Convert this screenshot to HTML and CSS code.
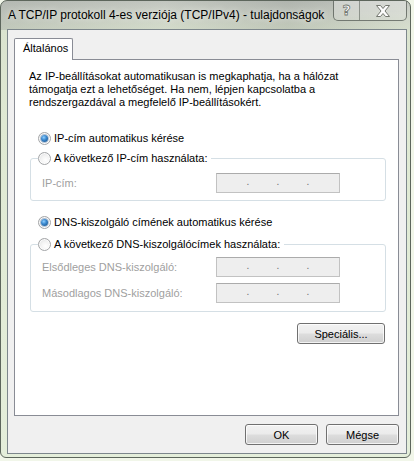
FILE: index.html
```html
<!DOCTYPE html>
<html lang="hu">
<head>
<meta charset="utf-8">
<title>TCP/IPv4</title>
<link rel="stylesheet" href="styles.css">
</head>
<body>
<div class="window">
  <div class="titlebar">
    <span class="title">A TCP/IP protokoll 4-es verziója (TCP/IPv4) - tulajdonságok</span>
    <div class="caption">
      <div class="cbtn help"><span class="qmark">?</span></div>
      <div class="cbtn close">
        <svg width="16" height="12" viewBox="0 0 16 12">
          <path d="M1.5 0.5 H5.5 L8 3.5 L10.5 0.5 H14.5 L10 6 L14.5 11.5 H10.5 L8 8.5 L5.5 11.5 H1.5 L6 6 Z" fill="#fdfdfd" stroke="#73776f" stroke-width="1" stroke-linejoin="round"/>
        </svg>
      </div>
    </div>
  </div>
  <div class="client">
    <div class="tabs"><div class="tab">Általános</div></div>
    <div class="panel">
      <p class="intro">Az IP-beállításokat automatikusan is megkaphatja, ha a hálózat<br>támogatja ezt a lehetőséget. Ha nem, lépjen kapcsolatba a<br>rendszergazdával a megfelelő IP-beállításokért.</p>

      <div class="radio-row first"><span class="radio checked"></span><span>IP-cím automatikus kérése</span></div>

      <div class="group g1">
        <div class="legend"><span class="radio"></span><span>A következő IP-cím használata:</span></div>
        <div class="field f-first"><span class="flabel">IP-cím:</span><span class="ipbox"><span class="dot">.</span><span class="dot">.</span><span class="dot">.</span></span></div>
      </div>

      <div class="radio-row dns"><span class="radio checked"></span><span>DNS-kiszolgáló címének automatikus kérése</span></div>

      <div class="group g2">
        <div class="legend"><span class="radio"></span><span>A következő DNS-kiszolgálócímek használata:</span></div>
        <div class="field f-first2"><span class="flabel">Elsődleges DNS-kiszolgáló:</span><span class="ipbox"><span class="dot">.</span><span class="dot">.</span><span class="dot">.</span></span></div>
        <div class="field f-second"><span class="flabel">Másodlagos DNS-kiszolgáló:</span><span class="ipbox"><span class="dot">.</span><span class="dot">.</span><span class="dot">.</span></span></div>
      </div>

      <div class="special-row"><button class="btn special">Speciális...</button></div>
    </div>
    <div class="footer">
      <button class="btn action">OK</button>
      <button class="btn action">Mégse</button>
    </div>
  </div>
</div>
</body>
</html>
```

FILE: styles.css
```css
* { box-sizing: border-box; }

html, body {
  margin: 0;
  padding: 0;
}

body {
  width: 414px;
  height: 461px;
  background: #f1f6e9;
  font-family: "Liberation Sans", Arial, sans-serif;
  font-size: 11px;
  color: #000;
  overflow: hidden;
}

.window {
  width: 411px;
  height: 458px;
  border: 1px solid #5d665c;
  border-radius: 7px 7px 6px 6px;
  background:
    linear-gradient(90deg, rgba(150,155,150,0.35) 0, rgba(190,195,185,0.2) 40%, rgba(120,125,120,0.25) 70%, rgba(200,205,195,0.15) 100%) top / 100% 29px no-repeat,
    linear-gradient(180deg, #c3c7c1 0, #d2d7cc 14px, #dae3cf 30px, #dfe9d3 120px, #e4eeda 100%);
  padding: 0 3px 3px 6px;
  display: flex;
  flex-direction: column;
}

.titlebar {
  height: 28px;
  display: flex;
  align-items: flex-start;
}

.title {
  flex: 1;
  padding: 6px 0 0 1px;
  font-family: "Liberation Sans", Arial, sans-serif;
  font-size: 12px;
  line-height: 16px;
  color: #000;
  text-shadow: 0 0 6px rgba(255,255,255,0.8);
  white-space: nowrap;
}

.caption {
  display: flex;
  height: 20px;
  border: 1px solid rgba(70,78,70,0.7);
  border-top: none;
  border-radius: 0 0 5px 5px;
  overflow: hidden;
  background: linear-gradient(180deg, rgba(255,255,255,0.35), rgba(255,255,255,0.15));
}

.cbtn {
  height: 19px;
  display: flex;
  align-items: center;
  justify-content: center;
}

.help {
  width: 26px;
  border-right: 1px solid rgba(70,78,70,0.5);
}

.qmark {
  font-family: "DejaVu Sans", sans-serif;
  font-weight: bold;
  font-size: 14px;
  line-height: 14px;
  color: #fdfdfd;
  -webkit-text-stroke: 0.8px #73776f;
  margin-top: -2px;
}

.close {
  width: 46px;
}

.client {
  height: 425px;
  border: 1px solid #7d878c;
  background: #f0f0f0;
  padding: 8px 7px 0 6px;
  display: flex;
  flex-direction: column;
}

.tabs {
  display: flex;
  position: relative;
  z-index: 1;
  margin-bottom: -1px;
}

.tab {
  height: 22px;
  width: 59px;
  border: 1px solid #898c95;
  border-bottom: none;
  background: #fff;
  padding: 2px 0 0 8px;
  line-height: 14px;
  border-radius: 2px 2px 0 0;
}

.panel {
  height: 357px;
  border: 1px solid #898c95;
  background: #fff;
  padding: 10px 12px 0 14px;
  display: flex;
  flex-direction: column;
}

.intro {
  margin: 0;
  line-height: 13px;
}

.radio-row, .legend {
  display: flex;
  align-items: center;
  height: 13px;
  line-height: 13px;
  white-space: nowrap;
}

.radio-row {
  margin-left: 9px;
}

.radio-row.first { margin-top: 23px; }
.radio-row.dns { margin-top: 15px; }

.radio {
  width: 13px;
  height: 13px;
  border-radius: 50%;
  border: 1px solid #a3a5a7;
  background: radial-gradient(circle at 60% 65%, #ffffff 0, #f3f3f3 45%, #d9dadb 100%);
  box-shadow: inset 0 0 0 1px rgba(255,255,255,0.8);
  margin-right: 3px;
  flex: none;
  display: flex;
  align-items: center;
  justify-content: center;
}

.radio.checked::after {
  content: "";
  width: 7px;
  height: 7px;
  border-radius: 50%;
  background: radial-gradient(circle at 40% 35%, #8fd0ff 0, #3d8ad0 40%, #10487f 100%);
  box-shadow: 0 0 0 1px rgba(30,80,140,0.3);
}

.group {
  margin-left: 1px;
  border: 1px solid #d5dfe5;
  border-radius: 3px;
  padding: 0 0 0 11px;
  display: flex;
  flex-direction: column;
}

.g1 { margin-top: 13px; padding-bottom: 7px; }
.g2 { margin-top: 15px; padding-bottom: 8px; }

.legend {
  margin-top: -7px;
  margin-left: -4px;
  align-self: flex-start;
  background: #fff;
  padding-right: 4px;
}

.field {
  display: flex;
  align-items: center;
  height: 20px;
}

.f-first { margin-top: 8px; }
.f-first2 { margin-top: 6px; }
.f-second { margin-top: 6px; }

.flabel {
  width: 174px;
  color: #a0a0a0;
  white-space: nowrap;
}

.ipbox {
  width: 124px;
  height: 20px;
  border: 1px solid #c2c2c2;
  border-top-color: #ababab;
  background: #eeeeee;
  display: flex;
  padding-left: 16px;
  color: #6d6d6d;
  line-height: 16px;
}

.dot {
  width: 30px;
  text-align: center;
  font-size: 10px;
}

.special-row {
  display: flex;
  justify-content: flex-end;
  margin-top: 11px;
  padding-right: 1px;
}

.btn {
  font-family: "Liberation Sans", Arial, sans-serif;
  font-size: 11px;
  color: #000;
  border: 1px solid #707070;
  border-radius: 3px;
  background: linear-gradient(180deg, #f2f2f2 0, #ebebeb 48%, #dddddd 52%, #cfcfcf 100%);
  box-shadow: inset 0 0 0 1px rgba(255,255,255,0.75);
  padding: 0;
  height: 21px;
  line-height: 18px;
}

.special { width: 88px; }

.footer {
  display: flex;
  justify-content: flex-end;
  gap: 8px;
  margin-top: 8px;
}

.action { width: 73px; }
```
